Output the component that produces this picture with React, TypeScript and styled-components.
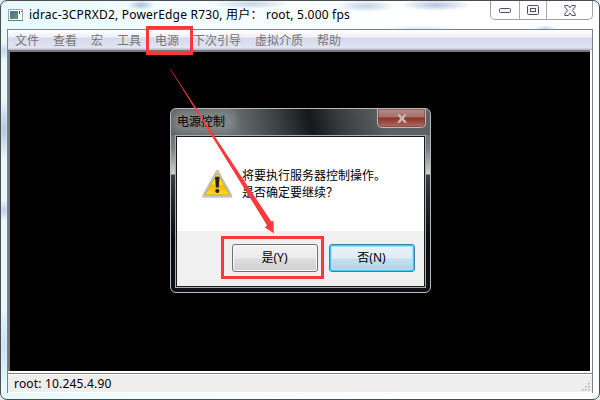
import React from "react";
import styled, { createGlobalStyle } from "styled-components";

const Global = createGlobalStyle`
  * { box-sizing: border-box; }
  body { margin: 0; background: #dfeef2; overflow: hidden; }
  body, button { font-family: "Noto Sans", "Noto Sans CJK SC", sans-serif; font-size: 12px; color: #000; }
`;

const Window = styled.div`
  position: relative;
  width: 600px;
  height: 400px;
  border: 1px solid #4b4d4f;
  border-radius: 7px;
  padding: 0 6px 6px;
  display: flex;
  flex-direction: column;
  background:
    radial-gradient(ellipse 14px 5px at 140px 4px, #a9bfdc, transparent),
    radial-gradient(ellipse 40px 5px at 250px 3px, #c4d4e6, transparent),
    radial-gradient(ellipse 30px 6px at 365px 5px, #c0d1e6, transparent),
    radial-gradient(ellipse 36px 6px at 435px 4px, #b3c4de, transparent),
    radial-gradient(ellipse 40px 4px at 420px 28px, #d3effb, transparent),
    radial-gradient(ellipse 12px 4px at 544px 28px, #bcd5ee, transparent),
    radial-gradient(ellipse 7px 9px at 3px 50px, #c3d3ec, transparent),
    radial-gradient(ellipse 7px 30px at 3px 128px, #b3c5e2, transparent),
    radial-gradient(ellipse 7px 10px at 3px 209px, #bccfee, transparent),
    radial-gradient(ellipse 7px 40px at 3px 345px, #c5e3f4, transparent),
    linear-gradient(90deg, #e6fafd, #f4fdff 30%, #fff 70%);
`;

const TitleBar = styled.header`
  height: 28px;
  flex: none;
  display: flex;
  align-items: flex-start;
`;

const AppIcon = styled.svg`
  width: 16px;
  height: 14px;
  margin: 7px 0 0 1px;
  flex: none;
`;

const Title = styled.h1`
  margin: 5px 0 0 5px;
  flex: 1;
  font-size: 12px;
  line-height: 18px;
  font-weight: 400;
  letter-spacing: 0.2px;
  white-space: pre;
`;

const Controls = styled.div`
  display: flex;
  height: 19px;
  width: 103px;
  border: 1px solid #a0a4a6;
  border-top: 0;
  border-radius: 0 0 5px 5px;
  background: #ffffffb0;
`;

const Control = styled.div<{ $w: number }>`
  width: ${(p) => p.$w}px;
  display: flex;
  align-items: center;
  justify-content: center;
  & + & { border-left: 1px solid #a9adaf; }
`;

const Frame = styled.main`
  flex: 1;
  min-height: 0;
  display: flex;
  flex-direction: column;
  border: 1px solid #7c8187;
  background: #fff;
`;

const MenuBar = styled.nav`
  height: 20px;
  flex: none;
  display: flex;
  padding: 1px 0 0 7px;
  background: linear-gradient(#fff 0, #eff1f8 7px, #d5daec 8px, #e0e4f3 18px, #b9bdcb 19px);
`;

const MenuItem = styled.span<{ $w: number }>`
  width: ${(p) => p.$w}px;
  flex: none;
  line-height: 19px;
  color: #757575;
  white-space: nowrap;
`;

const Screen = styled.section`
  height: 321px;
  flex: none;
  margin: 0 2px 0 0;
  background: #000;
  border-top: 2px solid #77777a;
  border-left: 2px solid #77777a;
`;

const StatusBar = styled.footer`
  flex: 1;
  margin-top: 2px;
  border-top: 1px solid #808080;
  box-shadow: inset 0 1px #fff, inset 0 -1px #fff;
  background: #f0eded;
  display: flex;
  justify-content: space-between;
  padding: 1px 1px 1px 6px;
  line-height: 17px;
  letter-spacing: 0.18px;
`;

const Grip = styled.svg`
  width: 10px;
  height: 10px;
  align-self: flex-end;
`;

const Dialog = styled.section`
  position: absolute;
  left: 169px;
  top: 107px;
  width: 261px;
  height: 185px;
  border: 1px solid #b7babb;
  border-radius: 6px;
  padding: 0 4px 4px;
  display: flex;
  flex-direction: column;
  background:
    linear-gradient(75deg, #5d6265 0, #686d70 65px, #3d4245 105px, #14181b 138px, #393d40 168px, #5d6163 210px) top / 100% 26px no-repeat,
    linear-gradient(#5d6265 0, #777b7d 38px, #cfd2d3 65px, #3b3e41 66px, #25292c 90px, #080c10 130px, #0d1116);
`;

const DialogTitleBar = styled.header`
  height: 26px;
  flex: none;
  display: flex;
  justify-content: space-between;
`;

const DialogTitle = styled.h2`
  margin: 5px 0 0 0;
  padding: 0 7px 0 2px;
  height: 16px;
  font-size: 12px;
  line-height: 16px;
  font-weight: 400;
  border-radius: 8px;
  background: #a0a4a570;
  box-shadow: 0 0 7px 4px #a0a4a570;
  clip-path: inset(-5px -16px -5px -4px);
`;

const DialogClose = styled.div`
  width: 49px;
  height: 19px;
  border: 1px solid #c4b6b4;
  border-top: 0;
  border-radius: 0 0 5px 5px;
  box-shadow: inset 0 0 0 1px #5c302c70;
  background: linear-gradient(#b58d88 0, #a66f69 8px, #8d3228 9px, #9c4b40 13px, #a97068);
  display: flex;
  align-items: center;
  justify-content: center;
`;

const DialogBody = styled.div`
  flex: 1;
  display: flex;
  flex-direction: column;
  border: 1px solid #a9adaf;
  background: #fff;
  box-shadow: inset 0 0 0 1px #17191b;
  padding: 1px;
`;

const Message = styled.div`
  flex: 1;
  display: flex;
  padding: 30px 0 0 25px;
`;

const Warning = styled.svg`
  width: 31px;
  height: 30px;
  margin-top: 2px;
  flex: none;
`;

const MessageText = styled.p`
  margin: 0 0 0 9px;
  line-height: 17px;
  white-space: nowrap;
`;

const Actions = styled.div`
  height: 55px;
  flex: none;
  display: flex;
  justify-content: flex-end;
  gap: 11px;
  padding: 13px 9px 0 0;
  background: #f0f0f0;
`;

const Action = styled.button<{ $default?: boolean }>`
  width: 86px;
  height: 28px;
  padding: 0 1px 2px 0;
  border: 1px solid ${(p) => (p.$default ? "#3c7fb1" : "#707070")};
  border-radius: 3px;
  box-shadow: ${(p) => (p.$default ? "inset 0 0 0 1px #3dcdf6, inset 0 0 0 2px #9fe2f8" : "inset 0 0 0 1px #fbfbfb")};
  background: ${(p) =>
    p.$default
      ? "linear-gradient(#e9f2f8 0, #dfedf5 13px, #c6e0ed 14px, #b2d3e4)"
      : "linear-gradient(#f2f2f2 0, #ebebeb 13px, #dddddd 14px, #cfcfcf)"};
`;

const Highlight = styled.div<{ $x: number; $y: number; $w: number; $h: number }>`
  position: absolute;
  left: ${(p) => p.$x - 1}px;
  top: ${(p) => p.$y - 1}px;
  width: ${(p) => p.$w}px;
  height: ${(p) => p.$h}px;
  border: 3px solid #fb3838;
`;

const Arrow = styled.svg`
  position: absolute;
  left: 164px;
  top: 59px;
  width: 120px;
  height: 180px;
`;

const menus: [string, number][] = [
  ["文件", 38], ["查看", 38], ["宏", 26], ["工具", 38], ["电源", 38],
  ["下次引导", 62], ["虚拟介质", 62], ["帮助", 30],
];

export default function App() {
  return (
    <>
      <Global />
      <Window>
        <TitleBar>
          <AppIcon viewBox="0 0 16 14">
            <defs>
              <linearGradient id="screen" x2="1" y2="1">
                <stop stopColor="#536b9a" /><stop offset="1" stopColor="#4fa06a" />
              </linearGradient>
            </defs>
            <path d="M.5 1.5h14v11H.5z" fill="#fff" stroke="#a0a3a5" />
            <path d="M2 3h8v8H2z" fill="url(#screen)" />
            <path d="M11 3h1v3h-1z" fill="#23528f" />
            <path d="M13 3h1v1h-1z" fill="#555" />
            <path d="M0 12.5h15" stroke="#777" />
          </AppIcon>
          <Title>idrac-3CPRXD2, PowerEdge R730, 用户： root, 5.000 fps</Title>
          <Controls>
            <Control $w={28}>
              <svg width="14" height="8" viewBox="0 0 14 8"><rect x="1.5" y="2.5" width="11" height="4" rx="1" fill="#f4f4f4" stroke="#4c5263" /></svg>
            </Control>
            <Control $w={27}>
              <svg width="12" height="10" viewBox="0 0 12 10"><rect x=".5" y=".5" width="11" height="9" rx="1" fill="#f4f4f4" stroke="#4c5263" /><rect x="3.5" y="3.5" width="5" height="3" fill="#fff" stroke="#4c5263" /></svg>
            </Control>
            <Control $w={46}>
              <svg width="12" height="11" viewBox="0 0 12 11"><path d="M.7.5h3.5L6 2.7 7.8.5h3.5v1.2L8.5 5.4l2.8 3.8v1.3H7.8L6 8.2l-1.8 2.3H.7V9.2l2.8-3.8L.7 1.7z" fill="#f4f4f4" stroke="#4c5263" /></svg>
            </Control>
          </Controls>
        </TitleBar>
        <Frame>
          <MenuBar>{menus.map(([label, w]) => <MenuItem key={label} $w={w}>{label}</MenuItem>)}</MenuBar>
          <Screen />
          <StatusBar>
            root: 10.245.4.90
            <Grip viewBox="0 0 10 10">
              {[[7, 1], [4, 4], [7, 4], [1, 7], [4, 7], [7, 7]].map(([x, y]) => (
                <rect key={`${x}-${y}`} x={x} y={y} width="1.6" height="1.6" fill="#b5b2b2" />
              ))}
            </Grip>
          </StatusBar>
        </Frame>
        <Dialog>
          <DialogTitleBar>
            <DialogTitle>电源控制</DialogTitle>
            <DialogClose>
              <svg width="10" height="9" viewBox="0 0 10 9"><path d="M0 0h3l2 2.4L7 0h3v.8L6.8 4.4 10 8.2V9H7L5 6.5 3 9H0v-.8l3.2-3.8L0 .8z" fill="#d3b9b6" stroke="#7c514d" strokeWidth=".4" /></svg>
            </DialogClose>
          </DialogTitleBar>
          <DialogBody>
            <Message>
              <Warning viewBox="0 0 31 30">
                <defs>
                  <linearGradient id="warn" x2="0" y2="1">
                    <stop stopColor="#fff04a" /><stop offset=".5" stopColor="#f6e40c" /><stop offset=".6" stopColor="#efb70c" /><stop offset="1" stopColor="#ffe226" />
                  </linearGradient>
                </defs>
                <path d="M15.3 2.6 28.8 27H1.8z" fill="#aaa" stroke="#a9aeb2" strokeWidth="3" strokeLinejoin="round" />
                <path d="M15.3 2.6 28.8 27H1.8z" fill="#bbb" stroke="#c9cccd" strokeWidth="1.6" strokeLinejoin="round" />
                <path d="M15.3 4 27.6 25.9H3z" fill="url(#warn)" stroke="#cf9d10" strokeWidth=".8" strokeLinejoin="round" />
                <path d="M13 8.3q2.3-1.4 4.6 0L16.7 18.6h-2.8z" fill="#24231c" />
                <circle cx="15.3" cy="22" r="2.1" fill="#24231c" />
              </Warning>
              <MessageText>将要执行服务器控制操作。<br />是否确定要继续？</MessageText>
            </Message>
            <Actions>
              <Action>是(Y)</Action>
              <Action $default>否(N)</Action>
            </Actions>
          </DialogBody>
        </Dialog>
        <Highlight $x={146} $y={26} $w={47} $h={29} />
        <Highlight $x={221} $y={236} $w={103} $h={43} />
        <Arrow viewBox="165 60 120 180">
          <path d="M169.6 68 271.3 221.5 273.5 220.8 273.9 233.3 264.8 227.6 267 225.2z" fill="#fb3b3b" />
          <path d="M170 68.5 198 112" stroke="#fb3b3b" strokeWidth=".8" opacity=".7" />
        </Arrow>
      </Window>
    </>
  );
}
